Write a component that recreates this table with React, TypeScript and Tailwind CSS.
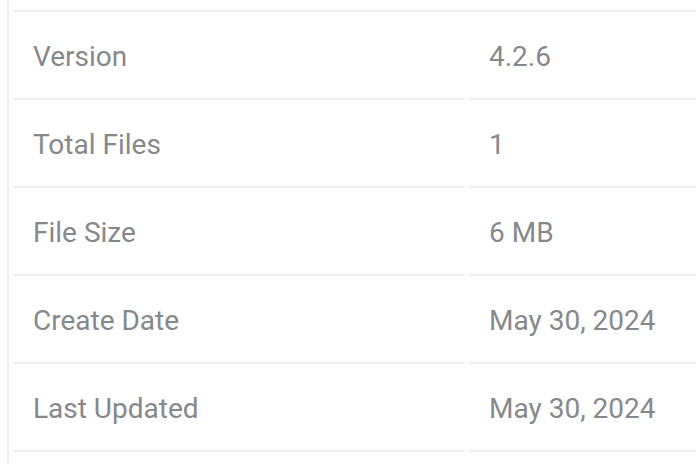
import React from "react";

const rows = [
  ["Version", "4.2.6"],
  ["Total Files", "1"],
  ["File Size", "6 MB"],
  ["Create Date", "May 30, 2024"],
  ["Last Updated", "May 30, 2024"],
];

export default function App() {
  return (
    <div
      className="w-[696px] h-[464px] overflow-hidden bg-white"
      style={{ fontFamily: "Roboto, 'Liberation Sans', sans-serif" }}
    >
      <div className="ml-[7px] h-full border-l-2 border-[#eeeeee] pl-[4px] pt-[10px]">
        <div className="w-[912px] border-t-2 border-[#eeeeee]">
          {rows.map(([k, v]) => (
            <div key={k} className="grid grid-cols-[452px_456px] gap-x-[4px]">
              <div className="h-[88px] border-b-2 border-[#eeeeee] pl-[20px] pt-[4px] flex items-center text-[28px] text-[#86898c]">
                {k}
              </div>
              <div className="h-[88px] border-b-2 border-[#eeeeee] pl-[20px] pt-[4px] flex items-center text-[28px] text-[#86898c]">
                {v}
              </div>
            </div>
          ))}
        </div>
      </div>
    </div>
  );
}
